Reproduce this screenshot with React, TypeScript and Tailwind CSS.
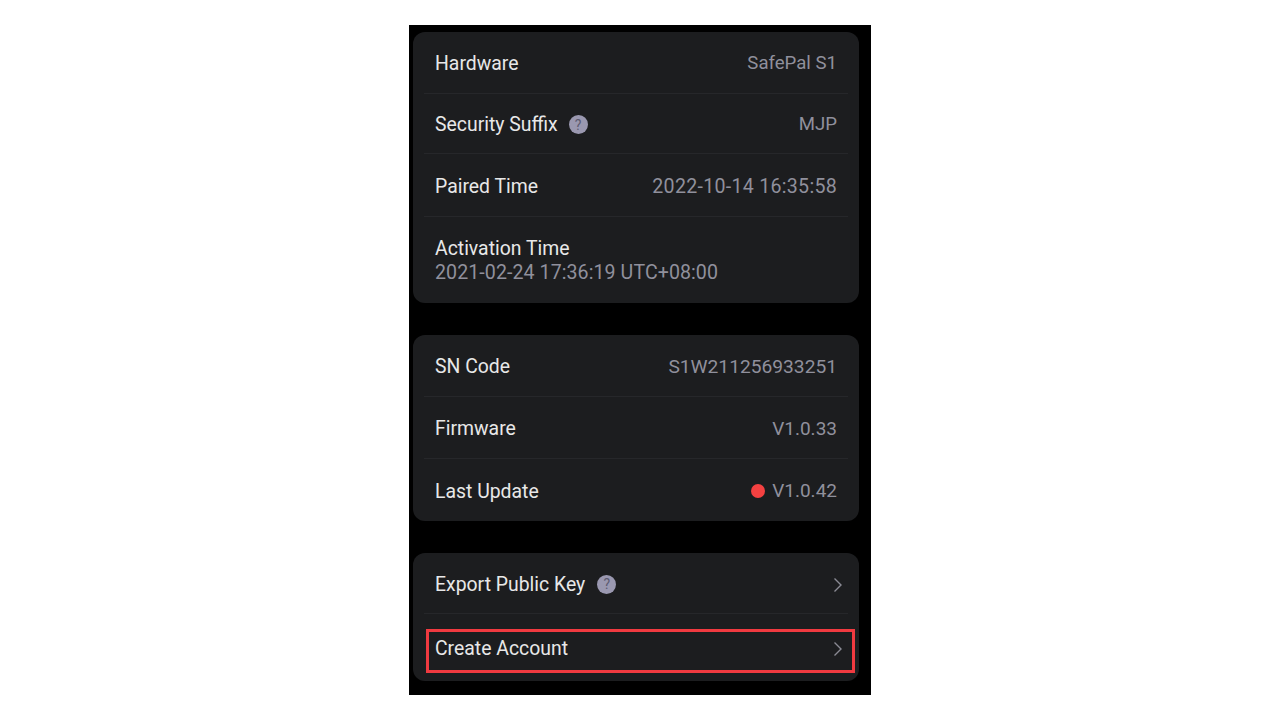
import type { ReactNode } from "react";

const font = { fontFamily: 'Roboto, "Noto Sans", sans-serif' };

function Help({ ml = "ml-[11px]" }: { ml?: string }) {
  return (
    <span className={`flex h-[19px] w-[19px] items-center justify-center rounded-full bg-[#9a98b0] text-[14px] leading-none text-[#5c5b70] ${ml}`}>
      ?
    </span>
  );
}

function Chevron() {
  return (
    <svg width="10" height="16" viewBox="0 0 10 16" fill="none" className="mr-[3px]">
      <path d="M1.5 1.5 L8 8 L1.5 14.5" stroke="#8a8a94" strokeWidth="1.4" />
    </svg>
  );
}

function Row({ h, label, value, valueClass = "text-[18.6px]", children }: { h: string; label: string; value?: string; valueClass?: string; children?: ReactNode }) {
  return (
    <div className={`mx-[11px] flex items-center justify-between border-b border-[#26272a] pl-[11px] pr-[11px] pt-[3px] ${h}`}>
      <div className="flex items-center text-[19.4px] text-[#e8e8e8]">
        <span>{label}</span>
        {children}
      </div>
      {value && <span className={`text-[#90909c] ${valueClass}`}>{value}</span>}
    </div>
  );
}

export default function App() {
  return (
    <div className="flex h-[720px] w-[1280px] justify-center bg-white pt-[25px]" style={font}>
      <div className="flex h-[670px] w-[462px] flex-col bg-black pl-[4px] pr-[12px] pt-[7px]">
        <div className="h-[271px] rounded-[12px] bg-[#1c1d1f]">
          <Row h="h-[62px]" label="Hardware" value="SafePal S1" />
          <Row h="h-[60px]" label="Security Suffix" value="MJP"><Help /></Row>
          <Row h="h-[63px]" label="Paired Time" value="2022-10-14 16:35:58" valueClass="text-[19.6px] tracking-[0.28px]" />
          <div className="flex flex-col pl-[22px] pt-[20px] leading-[24px]">
            <span className="text-[19.4px] text-[#e8e8e8]">Activation Time</span>
            <span className="text-[19.6px] tracking-[0.07px] text-[#90909c]">2021-02-24 17:36:19 UTC+08:00</span>
          </div>
        </div>
        <div className="mt-[32px] h-[186px] rounded-[12px] bg-[#1c1d1f]">
          <Row h="h-[62px]" label="SN Code" value="S1W211256933251" valueClass="text-[19.2px]" />
          <Row h="h-[62px]" label="Firmware" value="V1.0.33" valueClass="text-[19px]" />
          <div className="mx-[11px] flex h-[62px] items-center justify-between px-[11px] pt-[3px]">
            <span className="text-[19.4px] text-[#e8e8e8]">Last Update</span>
            <div className="flex items-center gap-[7px] text-[19px] text-[#90909c]">
              <span className="mb-[2px] h-[14px] w-[14px] rounded-full bg-[#f44141]" />
              <span>V1.0.42</span>
            </div>
          </div>
        </div>
        <div className="mt-[32px] h-[128px] rounded-[12px] bg-[#1c1d1f]">
          <div className="mx-[11px] flex h-[61px] items-center justify-between border-b border-[#26272a] pl-[11px] pr-[2px] pt-[3px]">
            <div className="flex items-center text-[19.4px] text-[#e8e8e8]">
              <span>Export Public Key</span>
              <Help ml="ml-[12px]" />
            </div>
            <Chevron />
          </div>
          <div className="ml-[13px] mr-[4px] mt-[15px] flex h-[44px] items-center justify-between border-[3px] border-[#f03a40] pb-[4px] pl-[6px] pr-[6px]">
            <span className="text-[19.4px] text-[#e8e8e8]">Create Account</span>
            <Chevron />
          </div>
        </div>
      </div>
    </div>
  );
}
